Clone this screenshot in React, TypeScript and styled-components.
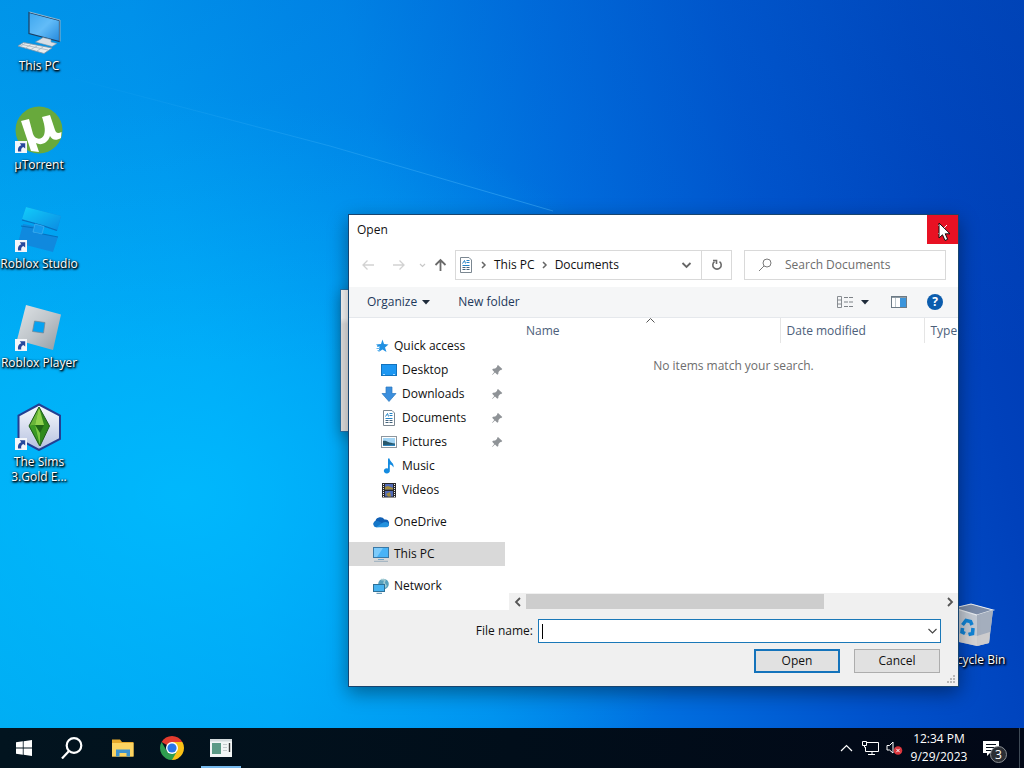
import React from 'react';
import styled, { createGlobalStyle } from 'styled-components';

const GlobalStyle = createGlobalStyle`
  * { box-sizing: border-box; }
  body {
    margin: 0;
    font-family: "Segoe UI", "Open Sans", "Noto Sans", sans-serif;
    font-size: 12px;
    line-height: 16px;
    color: #111;
  }
  button, input {
    font: inherit;
    color: inherit;
    margin: 0;
    padding: 0;
    border: 0;
    background: none;
  }
  svg { display: block; flex: none; }
`;

const Screen = styled.div`
  display: flex;
  flex-direction: column;
  min-height: 100vh;
  overflow: hidden;
`;

const Desktop = styled.main`
  position: relative;
  flex: 1;
  min-height: 700px;
  background:
    linear-gradient(180deg, rgba(0, 100, 200, 0.22) 0%, rgba(0, 120, 220, 0) 50%),
    radial-gradient(ellipse 55% 55% at 18% 68%, rgba(0, 190, 255, 0.8), rgba(0, 180, 255, 0) 100%),
    linear-gradient(78deg, #00a8f0 0%, #009df3 24%, #008aec 42%, #006cde 58%, #0052cc 74%, #0041bb 90%, #003ab2 100%);
`;

const LightRay = styled.svg`
  position: absolute;
  top: 0;
  left: 0;
`;

const IconColumn = styled.div`
  display: flex;
  flex-direction: column;
  align-items: flex-start;
`;

const DesktopItem = styled.button`
  position: relative;
  display: flex;
  flex-direction: column;
  align-items: center;
  gap: 3px;
  width: 78px;
  height: 99px;
  padding-top: 7px;
  color: #fff;
  line-height: 15px;
  text-shadow: 1px 1px 2px #000, 1px 1px 2px #000, 0 1px 3px rgba(0, 0, 0, 0.8);
`;

const ItemLabel = styled.span`
  white-space: nowrap;
`;

const BinSlot = styled.div`
  position: absolute;
  top: 594px;
  right: 11px;
`;

const BackWindow = styled.div`
  position: absolute;
  top: 289px;
  right: 400px;
  width: 284px;
  height: 143px;
  border: 1px solid #2b76ad;
  background: linear-gradient(#fff 28px, #e9e9e9 34px);
  box-shadow: 0 4px 14px rgba(0, 0, 0, 0.3);
`;

const Dialog = styled.section`
  position: absolute;
  top: 214px;
  right: 65px;
  width: 611px;
  border: 1px solid #17446f;
  background: #fff;
  box-shadow: 0 6px 18px rgba(0, 0, 0, 0.4);
`;

const TitleBar = styled.header`
  display: flex;
  justify-content: space-between;
  height: 29px;
`;

const Title = styled.h1`
  margin: 0;
  padding: 7px 8px;
  font-size: 12px;
  font-weight: 400;
`;

const CloseButton = styled.button`
  position: relative;
  display: flex;
  align-items: center;
  justify-content: center;
  width: 31px;
  background: #e81123;
`;

const Pointer = styled.svg`
  position: absolute;
  top: 7px;
  left: 11px;
`;

const NavRow = styled.div`
  display: flex;
  align-items: center;
  height: 43px;
  padding: 0 12px 1px 8px;
`;

const NavButton = styled.button<{ $width: number }>`
  display: flex;
  align-items: center;
  justify-content: center;
  width: ${(p) => p.$width}px;
  height: 28px;
`;

const AddressBar = styled.div`
  display: flex;
  align-items: center;
  flex: 1;
  height: 30px;
  margin: 0 12px 0 1px;
  border: 1px solid #d9d9d9;
`;

const Crumbs = styled.nav`
  display: flex;
  align-items: center;
  flex: 1;
  gap: 7px;
  padding-left: 2px;
`;

const RefreshButton = styled.button`
  display: flex;
  align-items: center;
  justify-content: center;
  width: 30px;
  height: 28px;
  border-left: 1px solid #d9d9d9;
`;

const SearchBox = styled.label`
  display: flex;
  align-items: center;
  gap: 12px;
  width: 202px;
  height: 30px;
  padding-left: 13px;
  border: 1px solid #d9d9d9;

  input {
    flex: 1;
    min-width: 0;
    outline: none;
  }
  input::placeholder {
    color: #6d6d6d;
    opacity: 1;
  }
`;

const Toolbar = styled.div`
  display: flex;
  align-items: center;
  height: 31px;
  padding: 0 15px 0 18px;
  border-bottom: 1px solid #e5e8ec;
  background: #f5f6f7;
  color: #1e395b;
`;

const ToolButton = styled.button<{ $gap: number }>`
  display: flex;
  align-items: center;
  margin-right: ${(p) => p.$gap}px;
  gap: 5px;
`;

const Spacer = styled.span`
  flex: 1;
`;

const HelpButton = styled.button`
  width: 16px;
  height: 16px;
  border-radius: 8px;
  background: #0b5cad;
  color: #fff;
  font-size: 12px;
  font-weight: 700;
  line-height: 16px;
  text-align: center;
`;

const Body = styled.div`
  display: flex;
`;

const Sidebar = styled.nav`
  display: flex;
  flex-direction: column;
  width: 156px;
  padding: 16px 0 12px;
`;

const TreeItem = styled.button<{ $nested?: boolean; $selected?: boolean; $spaced?: boolean }>`
  display: flex;
  align-items: center;
  gap: 5px;
  height: 24px;
  margin-top: ${(p) => (p.$spaced ? 8 : 0)}px;
  padding: 0 2px 0 ${(p) => (p.$nested ? 32 : 24)}px;
  background: ${(p) => (p.$selected ? '#d9d9d9' : 'transparent')};
  text-align: left;
`;

const TreeLabel = styled.span`
  flex: 1;
`;

const FilePane = styled.div`
  display: flex;
  flex-direction: column;
  flex: 1;
  min-width: 0;
  padding-left: 4px;
`;

const FileTable = styled.table`
  width: 100%;
  border-collapse: collapse;
  table-layout: fixed;
  color: #6d6d6d;
`;

const ColumnHead = styled.th<{ $width?: number; $indent: number }>`
  position: relative;
  width: ${(p) => (p.$width ? `${p.$width}px` : 'auto')};
  height: 25px;
  padding: 0 0 0 ${(p) => p.$indent}px;
  border-right: ${(p) => (p.$width ? '1px solid #e5e5e5' : '0')};
  color: #4c607a;
  font-weight: 400;
  text-align: left;
`;

const SortMark = styled.svg`
  position: absolute;
  top: 0;
  left: 137px;
`;

const EmptyCell = styled.td`
  padding: 15px 0;
  text-align: center;
`;

const ScrollTrack = styled.div`
  display: flex;
  align-items: center;
  height: 17px;
  margin-top: auto;
  background: #f0f0f0;
`;

const ScrollArrow = styled.button`
  display: flex;
  align-items: center;
  justify-content: center;
  width: 17px;
  height: 17px;
`;

const ScrollThumb = styled.div`
  width: 298px;
  height: 15px;
  margin-right: auto;
  background: #cdcdcd;
`;

const Footer = styled.footer`
  position: relative;
  display: flex;
  flex-direction: column;
  align-items: flex-end;
  gap: 6px;
  padding: 9px 17px 13px;
  background: #f0f0f0;
`;

const FileNameRow = styled.label`
  display: flex;
  align-items: center;
  gap: 5px;
`;

const ComboBox = styled.span`
  display: flex;
  align-items: center;
  width: 403px;
  height: 24px;
  padding: 0 2px 0 3px;
  border: 1px solid #1a78b8;
  background: #fff;

  input {
    flex: 1;
    height: 20px;
    outline: none;
  }
`;

const Caret = styled.span`
  width: 1px;
  height: 15px;
  background: #000;
`;

const ButtonRow = styled.div`
  display: flex;
  gap: 14px;
  padding-right: 1px;
`;

const DialogButton = styled.button<{ $primary?: boolean }>`
  width: 86px;
  height: 24px;
  border: ${(p) => (p.$primary ? '2px solid #1473bb' : '1px solid #adadad')};
  background: #e1e1e1;
`;

const ResizeGrip = styled.svg`
  position: absolute;
  right: 2px;
  bottom: 2px;
`;

const Taskbar = styled.footer`
  display: flex;
  height: 40px;
  background: linear-gradient(90deg, #02141f, #010e1a 50%, #020817);
  color: #fff;
`;

const TaskButton = styled.button<{ $active?: boolean }>`
  display: flex;
  align-items: center;
  justify-content: center;
  width: 48px;
  height: 40px;
  background: ${(p) => (p.$active ? 'linear-gradient(#76b9ed, #76b9ed) center bottom / 40px 2px no-repeat' : 'none')};
`;

const PinnedApps = styled.div`
  display: flex;
  gap: 1px;
  margin-left: 3px;
`;

const Tray = styled.div`
  display: flex;
  align-items: center;
  margin-left: auto;
`;

const TrayButton = styled.button`
  display: flex;
  align-items: center;
  justify-content: center;
  width: 24px;
  height: 40px;
`;

const Clock = styled.button`
  width: 66px;
  line-height: 18px;
  text-align: center;
`;

const Notifications = styled.button`
  position: relative;
  display: flex;
  align-items: center;
  width: 48px;
  height: 40px;
  padding-left: 11px;
  border-right: 1px solid #3f4a56;
  margin-right: 4px;
`;

const Badge = styled.span`
  position: absolute;
  top: 18px;
  left: 18px;
  width: 17px;
  height: 17px;
  border: 1px solid #8b8f94;
  border-radius: 9px;
  background: #2b2f35;
  font-size: 12px;
  line-height: 15px;
  text-align: center;
`;

const ShortcutArrow = () => (
  <g>
    <rect x="0" y="35" width="12" height="12" fill="#f4f6fa" />
    <path d="M3 45.500C2.500 42 4 39.800 6.300 39.300L4.800 37.300H10.200V42.600L8.300 41C6.500 41.800 5.800 43.400 6.300 45.500Z" fill="#27489c" />
  </g>
);

const PcArt = () => (
  <svg width="48" height="48" viewBox="0 0 48 48">
    <defs>
      <linearGradient id="pcScreen" x1="0" y1="0" x2="1" y2="1">
        <stop offset="0" stopColor="#3da6ee" />
        <stop offset=".5" stopColor="#62bcf8" />
        <stop offset="1" stopColor="#2388dc" />
      </linearGradient>
    </defs>
    <path d="M14 5.500L44.500 13.500V34.500L14 26.500Z" fill="url(#pcScreen)" stroke="#1c3f63" strokeWidth="1.200" />
    <path d="M14.500 5L45 13V34.500" fill="none" stroke="#b3c8d6" strokeWidth=".8" />
    <path d="M28 30.500L36 32.500V35L42 36.500L37 39.500L20.500 35L25 32.500Z" fill="#d8dfe6" stroke="#7d94a8" strokeWidth=".6" />
    <path d="M8.500 35.500L37 41L29 46.500L3 39Z" fill="#e9ecee" stroke="#7d94a8" strokeWidth=".8" />
    <path d="M7 37.500L33 43M10.500 36.300L5 39.200M16 37.500L10.500 41M22 39L16 42.500M28 40L22 44" stroke="#a7b6c2" strokeWidth=".8" />
  </svg>
);

const TorrentArt = () => (
  <svg width="48" height="48" viewBox="0 0 48 48">
    <circle cx="24" cy="24" r="23.500" fill="#68a93c" />
    <path d="M6 15L14 13L18 28C20 34 27 34 29 29C31 24 29 17 27 11L35 9L40 24C41 27 43 28 46.500 26L46 32C41 35 37 34 35 30C33 37 26 40 21 37L24 46L16 45Z" fill="#fff" />
    <ShortcutArrow />
  </svg>
);

const StudioArt = () => (
  <svg width="48" height="48" viewBox="0 0 48 48">
    <defs>
      <linearGradient id="studioTop" x1="0" y1="0" x2="1" y2="1">
        <stop offset="0" stopColor="#12cdfb" />
        <stop offset="1" stopColor="#0b8ce2" />
      </linearGradient>
    </defs>
    <path d="M11 2L46 11L42 26L29 22L27 29L43 32L38 47L3 38L8 19L19 21L20 18L7 14Z" fill="#1089de" />
    <path d="M11 2L46 11L42 25L20 18L7 14Z" fill="url(#studioTop)" />
    <path d="M7 15L20 18.500L29 21L42 25.500M6 21L19 23M20 27.500L43 32" fill="none" stroke="#0670bd" strokeWidth="1.200" />
    <path d="M20 19L29 21.500L27 29L18 27Z" fill="#1498eb" stroke="#45b3f2" strokeWidth=".7" />
    <ShortcutArrow />
  </svg>
);

const PlayerArt = () => (
  <svg width="48" height="48" viewBox="0 0 48 48">
    <defs>
      <linearGradient id="playerBody" x1="0" y1="0" x2="1" y2="1">
        <stop offset="0" stopColor="#dfe3e6" />
        <stop offset=".5" stopColor="#c0c6cb" />
        <stop offset="1" stopColor="#939ba3" />
      </linearGradient>
    </defs>
    <path d="M11 1L46 10.500L38 46L2 36Z" fill="url(#playerBody)" />
    <path d="M19.500 17L30 18.500L28.500 29L17.500 27.500Z" fill="#06a3f2" stroke="#7a858f" strokeWidth=".7" />
    <ShortcutArrow />
  </svg>
);

const SimsArt = () => (
  <svg width="48" height="48" viewBox="0 0 48 48">
    <defs>
      <linearGradient id="simsHex" x1="0" y1="0" x2="0" y2="1">
        <stop offset="0" stopColor="#fafbfe" />
        <stop offset="1" stopColor="#b4c0df" />
      </linearGradient>
    </defs>
    <path d="M24 1.500L45 12.500V36L24 47L3.500 36V12.500Z" fill="url(#simsHex)" stroke="#233f92" strokeWidth="2" />
    <path d="M24 4L34.500 23L25 43L14 23Z" fill="#2f8a1d" />
    <path d="M24 4L20 22L14 23Z" fill="#69b53a" />
    <path d="M24 4L29 22L20 22Z" fill="#8fd24e" />
    <path d="M14 23L20 22L24 43Z" fill="#3b9b25" />
    <path d="M20 22H29L25 30Z" fill="#1f6517" />
    <path d="M20 22L25 30V43Z" fill="#78c843" />
    <path d="M24 4L34.500 23L25 43L14 23Z" fill="none" stroke="#1f5c1d" strokeWidth="1" />
    <ShortcutArrow />
  </svg>
);

const BinArt = () => (
  <svg width="48" height="48" viewBox="0 0 48 48">
    <path d="M4 7L21 3L43 9L39 42L27 45L9 41Z" fill="#c3cad4" />
    <path d="M4 7L21 3L43 9L27 14Z" fill="#7d8da8" stroke="#e7ebf0" strokeWidth="1.200" />
    <path d="M27 14L43 9L39 42L27 45Z" fill="#a4aebd" />
    <path d="M9 33L27 35L40 31L39 42L27 45L9 41Z" fill="#ded9d4" opacity=".7" />
    <path d="M12.500 24L16 19.500L20.500 20.500L22 24M23 27L22.500 32.500L18.500 33.500M15 32.500L12 31L12.500 27" fill="none" stroke="#1184d6" strokeWidth="3.600" />
  </svg>
);

const Stroke = ({ d, w = 12, h = 12, color = '#555', width = 1.5 }: { d: string; w?: number; h?: number; color?: string; width?: number }) => (
  <svg width={w} height={h} viewBox={`0 0 ${w} ${h}`} fill="none" stroke={color} strokeWidth={width}>
    <path d={d} />
  </svg>
);

const SmallSvg = ({ children }: { children: React.ReactNode }) => (
  <svg width="16" height="16" viewBox="0 0 16 16">{children}</svg>
);

const StarIcon = () => (
  <SmallSvg>
    <path d="M9.500 1.500L11 6L15.500 6.500L12 9.500L13.500 14L9.500 11.500L5.500 14L6.500 9.500L3 6.500L8 6Z" fill="#2090e2" />
    <path d="M4 8.500H7M3.500 10.500H7M4.500 12.500H7" stroke="#62b5ee" />
  </SmallSvg>
);
const DesktopIcon = () => (
  <SmallSvg>
    <rect x="0.500" y="2.500" width="15" height="11" fill="#1d97f2" stroke="#1272bd" />
    <path d="M2 12.500H4M12 12.500H14" stroke="#a6dbff" />
  </SmallSvg>
);
const DownloadIcon = () => (
  <SmallSvg>
    <path d="M5 1H11V7.500H15L8 15.500L1 7.500H5Z" fill="#3b8fdd" stroke="#2877be" strokeWidth=".7" />
  </SmallSvg>
);
const DocumentIcon = () => (
  <SmallSvg>
    <path d="M2.500 0.500H11L13.500 3V15.500H2.500Z" fill="#fff" stroke="#7b8791" />
    <path d="M4.500 6.500L6.500 3.500L7.500 6.500M8.500 3.500H11.500M8.500 5.500H11.500M4.500 8.500H11.500" fill="none" stroke="#2583c5" />
    <path d="M4.500 10.500H7.500M8.500 10.500H11.500M4.500 12.500H7.500M8.500 12.500H11.500" stroke="#44637b" />
  </SmallSvg>
);
const PictureIcon = () => (
  <SmallSvg>
    <rect x="0.500" y="2.500" width="15" height="11" fill="#fff" stroke="#8d969e" />
    <rect x="2" y="4" width="12" height="8" fill="#a3d5f5" />
    <path d="M2 7C5 6 7 9 14 9.500V12H2Z" fill="#28576b" />
    <path d="M2 11L14 10.500V12H2Z" fill="#2d84bd" />
  </SmallSvg>
);
const MusicIcon = () => (
  <SmallSvg>
    <path d="M7 0.500H8.500C9 4 13.500 5 12.500 9.500C11.500 7.500 10 6.500 8.800 6.500V12.500A3 2.600 0 1 1 7 10.500Z" fill="#148be0" />
  </SmallSvg>
);
const VideoIcon = () => (
  <SmallSvg>
    <rect x="1" y="1" width="14" height="14.500" fill="#29292b" />
    <path d="M2.500 2V15M13.500 2V15" stroke="#eee" strokeDasharray="1 1" />
    <rect x="4" y="2" width="8" height="5.500" fill="#526bb8" />
    <rect x="4" y="9" width="8" height="5.500" fill="#526bb8" />
    <path d="M4 5L7 4L12 6V7.500H4ZM5 12L9 10L10 14.500H7Z" fill="#a38b3b" />
  </SmallSvg>
);
const CloudIcon = () => (
  <SmallSvg>
    <path d="M3.500 13A3.300 3.300 0 0 1 2.500 6.700A5 5 0 0 1 11.500 5.500A3.800 3.800 0 0 1 13 13Z" fill="#0f5fb4" />
    <path d="M3 13.200A3 3 0 0 1 1 8.500C3 6 6 7 8 8.500L14 12.500Z" fill="#1576c8" />
    <path d="M3 13.200L10 8.500C13 7 16 8.500 16 10.800C16 12.500 14.500 13.200 13 13.200Z" fill="#2492de" />
  </SmallSvg>
);
const MonitorIcon = () => (
  <SmallSvg>
    <rect x="0.500" y="1.500" width="15" height="10" fill="#48b3f7" stroke="#3978a6" />
    <path d="M1 2H10L4 11H1Z" fill="#7ccbfb" />
    <path d="M5 13.500H11" stroke="#6ea8cf" />
    <path d="M1 15.300H15" stroke="#8aa5b8" strokeWidth=".8" />
  </SmallSvg>
);
const NetworkIcon = () => (
  <SmallSvg>
    <circle cx="10.500" cy="6" r="5.300" fill="#58a0bd" />
    <path d="M8 1.500L12 2L11 5L13 8L11 10" fill="none" stroke="#a5ccd3" strokeWidth="1.500" />
    <rect x="0.500" y="6.500" width="11" height="7" fill="#47b3f0" stroke="#2e7097" />
    <path d="M3.500 15.300H9" stroke="#4d88ab" />
  </SmallSvg>
);
const PinIcon = () => (
  <svg width="12" height="12" viewBox="0 0 12 12">
    <path d="M7 1L11.300 5L10 6.200L9.300 6L7.500 8L7.300 10L6.300 10.800L4 8.600L1.300 11L1 10.700L3.300 7.900L1.200 5.700L2 4.700L4.200 4.600L6.200 2.800L6 2Z" fill="#8f9397" />
  </svg>
);

const places = [
  { label: 'Desktop', icon: <DesktopIcon />, pinned: true },
  { label: 'Downloads', icon: <DownloadIcon />, pinned: true },
  { label: 'Documents', icon: <DocumentIcon />, pinned: true },
  { label: 'Pictures', icon: <PictureIcon />, pinned: true },
  { label: 'Music', icon: <MusicIcon />, pinned: false },
  { label: 'Videos', icon: <VideoIcon />, pinned: false },
];

const shortcuts = [
  { lines: ['This PC'], art: <PcArt /> },
  { lines: ['µTorrent'], art: <TorrentArt /> },
  { lines: ['Roblox Studio'], art: <StudioArt /> },
  { lines: ['Roblox Player'], art: <PlayerArt /> },
  { lines: ['The Sims', '3.Gold E...'], art: <SimsArt /> },
];

const DownTriangle = () => (
  <svg width="8" height="5" viewBox="0 0 8 5"><path d="M0 0H8L4 4.500Z" fill="#1e2b3a" /></svg>
);

function OpenDialog() {
  return (
    <Dialog aria-label="Open">
      <TitleBar>
        <Title>Open</Title>
        <CloseButton aria-label="Close">
          <Stroke d="M1 1L10 10M10 1L1 10" w={11} h={11} color="#fff" width={1} />
          <Pointer width="13" height="20" viewBox="0 0 13 20">
            <path d="M1 1V16L4.500 12.800L7 18.500L9.700 17.300L7.200 11.800H12Z" fill="#fff" stroke="#111" />
          </Pointer>
        </CloseButton>
      </TitleBar>
      <NavRow>
        <NavButton $width={22} aria-label="Back"><Stroke d="M12 6H1M5.500 1.500L1 6L5.500 10.500" w={13} color="#d2d2d2" width={1.3} /></NavButton>
        <NavButton $width={38} aria-label="Forward"><Stroke d="M1 6H12M7.500 1.500L12 6L7.500 10.500" w={13} color="#d2d2d2" width={1.3} /></NavButton>
        <NavButton $width={10} aria-label="Recent locations"><Stroke d="M1 2L3.500 4.500L6 2" w={7} h={6} color="#c8c8c8" width={1.2} /></NavButton>
        <NavButton $width={27} aria-label="Up"><Stroke d="M6.500 13V2M1.500 7L6.500 2L11.500 7" w={13} h={14} color="#6a6a6a" width={1.8} /></NavButton>
        <AddressBar>
          <Crumbs>
            <DocumentIcon />
            <Stroke d="M1 2L4 5L1 8" w={6} h={10} color="#666" />
            <button>This PC</button>
            <Stroke d="M1 2L4 5L1 8" w={6} h={10} color="#666" />
            <button>Documents</button>
          </Crumbs>
          <NavButton $width={29} aria-label="Previous locations"><Stroke d="M1.500 2L5.500 6L9.500 2" w={11} h={8} color="#666" width={1.8} /></NavButton>
          <RefreshButton aria-label="Refresh">
            <svg width="12" height="12" viewBox="0 0 12 12" fill="none" stroke="#6a6a6a" strokeWidth="1.600">
              <path d="M8.500 2.600A4.200 4.200 0 1 1 3.500 2.600" />
              <path d="M2 1.500H5.500V5" />
            </svg>
          </RefreshButton>
        </AddressBar>
        <SearchBox>
          <svg width="15" height="14" viewBox="0 0 15 14" fill="none" stroke="#7a7a7a">
            <circle cx="9" cy="5" r="4" />
            <path d="M6 8L1 13" />
          </svg>
          <input type="text" placeholder="Search Documents" aria-label="Search Documents" />
        </SearchBox>
      </NavRow>
      <Toolbar>
        <ToolButton $gap={28}>Organize <DownTriangle /></ToolButton>
        <ToolButton $gap={0}>New folder</ToolButton>
        <Spacer />
        <ToolButton $gap={22} aria-label="Change your view">
          <svg width="20" height="14" viewBox="0 0 20 14" fill="none" stroke="#7d8287">
            <path d="M1.500 1.500H5.500V12.500H1.500ZM1.500 5H5.500M1.500 9H5.500" strokeWidth=".9" />
            <path d="M8 2.500H12M13 2.500H17M8 7H12M13 7H17M8 11.500H12M13 11.500H17" />
          </svg>
          <DownTriangle />
        </ToolButton>
        <ToolButton $gap={20} aria-label="Preview pane">
          <svg width="16" height="12" viewBox="0 0 16 12">
            <rect x="0.500" y="0.500" width="15" height="11" fill="#fff" stroke="#6c7a85" />
            <path d="M1 1.500H15" stroke="#8e9aa3" />
            <path d="M4.500 2V11" stroke="#bcc6cc" />
            <rect x="9" y="2" width="6" height="9" fill="#3b95dc" />
          </svg>
        </ToolButton>
        <HelpButton aria-label="Help">?</HelpButton>
      </Toolbar>
      <Body>
        <Sidebar>
          <TreeItem><StarIcon /><TreeLabel>Quick access</TreeLabel></TreeItem>
          {places.map((p) => (
            <TreeItem key={p.label} $nested>
              {p.icon}
              <TreeLabel>{p.label}</TreeLabel>
              {p.pinned && <PinIcon />}
            </TreeItem>
          ))}
          <TreeItem $spaced><CloudIcon /><TreeLabel>OneDrive</TreeLabel></TreeItem>
          <TreeItem $spaced $selected><MonitorIcon /><TreeLabel>This PC</TreeLabel></TreeItem>
          <TreeItem $spaced><NetworkIcon /><TreeLabel>Network</TreeLabel></TreeItem>
        </Sidebar>
        <FilePane>
          <FileTable>
            <thead>
              <tr>
                <ColumnHead $width={271} $indent={17}>
                  Name
                  <SortMark width="9" height="5" viewBox="0 0 9 5" fill="none" stroke="#555">
                    <path d="M0.500 4.500L4.500 0.500L8.500 4.500" />
                  </SortMark>
                </ColumnHead>
                <ColumnHead $width={144} $indent={6}>Date modified</ColumnHead>
                <ColumnHead $indent={6}>Type</ColumnHead>
              </tr>
            </thead>
            <tbody>
              <tr><EmptyCell colSpan={3}>No items match your search.</EmptyCell></tr>
            </tbody>
          </FileTable>
          <ScrollTrack>
            <ScrollArrow aria-label="Scroll left"><Stroke d="M6 1L2 5L6 9" w={8} h={10} width={1.8} /></ScrollArrow>
            <ScrollThumb />
            <ScrollArrow aria-label="Scroll right"><Stroke d="M2 1L6 5L2 9" w={8} h={10} width={1.8} /></ScrollArrow>
          </ScrollTrack>
        </FilePane>
      </Body>
      <Footer>
        <FileNameRow>
          File name:
          <ComboBox>
            <Caret />
            <input type="text" aria-label="File name" />
            <Stroke d="M1.500 2L5.500 6L9.500 2" w={11} h={8} color="#444" width={1.1} />
          </ComboBox>
        </FileNameRow>
        <ButtonRow>
          <DialogButton $primary>Open</DialogButton>
          <DialogButton>Cancel</DialogButton>
        </ButtonRow>
        <ResizeGrip width="10" height="10" viewBox="0 0 10 10" fill="#b9b9b9">
          <path d="M7 1H9V3H7ZM4 4H6V6H4ZM7 4H9V6H7ZM1 7H3V9H1ZM4 7H6V9H4ZM7 7H9V9H7Z" />
        </ResizeGrip>
      </Footer>
    </Dialog>
  );
}

function SystemTaskbar() {
  return (
    <Taskbar>
      <TaskButton aria-label="Start">
        <svg width="16" height="16" viewBox="0 0 16 16" fill="#fff">
          <path d="M0 2.300L6.800 1.300V7.600H0ZM7.600 1.200L16 0V7.600H7.600ZM0 8.400H6.800V14.700L0 13.700ZM7.600 8.400H16V16L7.600 14.800Z" />
        </svg>
      </TaskButton>
      <TaskButton aria-label="Search">
        <svg width="22" height="22" viewBox="0 0 22 22" fill="none" stroke="#fff" strokeWidth="2.200">
          <circle cx="13" cy="8.500" r="7.300" />
          <path d="M8 14L1 21.500" />
        </svg>
      </TaskButton>
      <PinnedApps>
        <TaskButton aria-label="File Explorer">
          <svg width="22" height="18" viewBox="0 0 22 18">
            <path d="M0 0.500H8L10 3H21.500V17.500H0Z" fill="#e6a92c" />
            <path d="M0 4H21.500V17.500H0Z" fill="#fcd462" />
            <path d="M4 17.500V10.500H18V17.500H14.500V14H7.500V17.500Z" fill="#3f93cd" />
          </svg>
        </TaskButton>
        <TaskButton aria-label="Chrome">
          <svg width="24" height="24" viewBox="0 0 24 24">
            <path d="M12 12L1.610 6A12 12 0 0 1 22.390 6Z" fill="#e33b2e" />
            <path d="M12 12V6H22.390A12 12 0 0 1 12 24Z" fill="#fbc116" />
            <path d="M17.200 15L12 24A12 12 0 0 1 1.610 6L6.800 15L12 18Z" fill="#2f9e4f" />
            <circle cx="12" cy="12" r="6" fill="#fff" />
            <circle cx="12" cy="12" r="4.600" fill="#2a76e8" />
          </svg>
        </TaskButton>
        <TaskButton $active aria-label="Application">
          <svg width="22" height="18" viewBox="0 0 22 18">
            <rect width="22" height="18" fill="#f2f5f5" />
            <path d="M0 0H22V2.500H0Z" fill="#d3dadc" />
            <rect x="2" y="4" width="9" height="11" fill="#5c9a86" />
            <path d="M13 5.500H17M13 8.500H17M13 11.500H17" stroke="#c3cacc" />
            <path d="M19.500 4V13" stroke="#333" strokeWidth="1.400" />
          </svg>
        </TaskButton>
      </PinnedApps>
      <Tray>
        <TrayButton aria-label="Show hidden icons"><Stroke d="M1 7L6.500 1.500L12 7" w={13} h={8} color="#fff" width={1.2} /></TrayButton>
        <TrayButton aria-label="Network">
          <svg width="17" height="14" viewBox="0 0 17 14" fill="none" stroke="#fff">
            <path d="M5 1.500H16.500V10.500H3.500V6M10 10.500V13.500M6 13.500H13M0.500 0.500H4.500V4.500H0.500ZM2.500 4.500V6.500" />
          </svg>
        </TrayButton>
        <TrayButton aria-label="Volume">
          <svg width="17" height="14" viewBox="0 0 17 14">
            <path d="M1 4.500H3.500L7 1V12L3.500 9H1Z" fill="none" stroke="#fff" />
            <circle cx="12" cy="9.500" r="4.300" fill="#d9333a" />
            <path d="M10.300 7.800L13.700 11.200M13.700 7.800L10.300 11.200" stroke="#fff" />
          </svg>
        </TrayButton>
        <Clock>12:34 PM<br />9/29/2023</Clock>
        <Notifications aria-label="Notifications">
          <svg width="17" height="17" viewBox="0 0 17 17">
            <path d="M0 1H16V13H7L4 16V13H0Z" fill="#fff" />
            <path d="M3 4.500H13M3 7.500H13M3 10.500H9" stroke="#06101c" />
          </svg>
          <Badge>3</Badge>
        </Notifications>
      </Tray>
    </Taskbar>
  );
}

export default function App() {
  return (
    <Screen>
      <GlobalStyle />
      <Desktop>
        <LightRay width="560" height="220" viewBox="0 0 560 220" fill="none">
          <defs>
            <linearGradient id="rayFade" x1="0" y1="0" x2="1" y2="0">
              <stop offset="0" stopColor="#5cc4ff" stopOpacity="0" />
              <stop offset=".7" stopColor="#5cc4ff" stopOpacity=".3" />
              <stop offset="1" stopColor="#5cc4ff" stopOpacity=".4" />
            </linearGradient>
          </defs>
          <path d="M60 75L330 146L553 211" stroke="url(#rayFade)" strokeWidth="1" />
        </LightRay>
        <IconColumn>
          {shortcuts.map((s) => (
            <DesktopItem key={s.lines[0]}>
              {s.art}
              <div>
                {s.lines.map((line) => (
                  <div key={line}><ItemLabel>{line}</ItemLabel></div>
                ))}
              </div>
            </DesktopItem>
          ))}
        </IconColumn>
        <BinSlot>
          <DesktopItem><BinArt /><ItemLabel>Recycle Bin</ItemLabel></DesktopItem>
        </BinSlot>
        <BackWindow />
        <OpenDialog />
      </Desktop>
      <SystemTaskbar />
    </Screen>
  );
}
